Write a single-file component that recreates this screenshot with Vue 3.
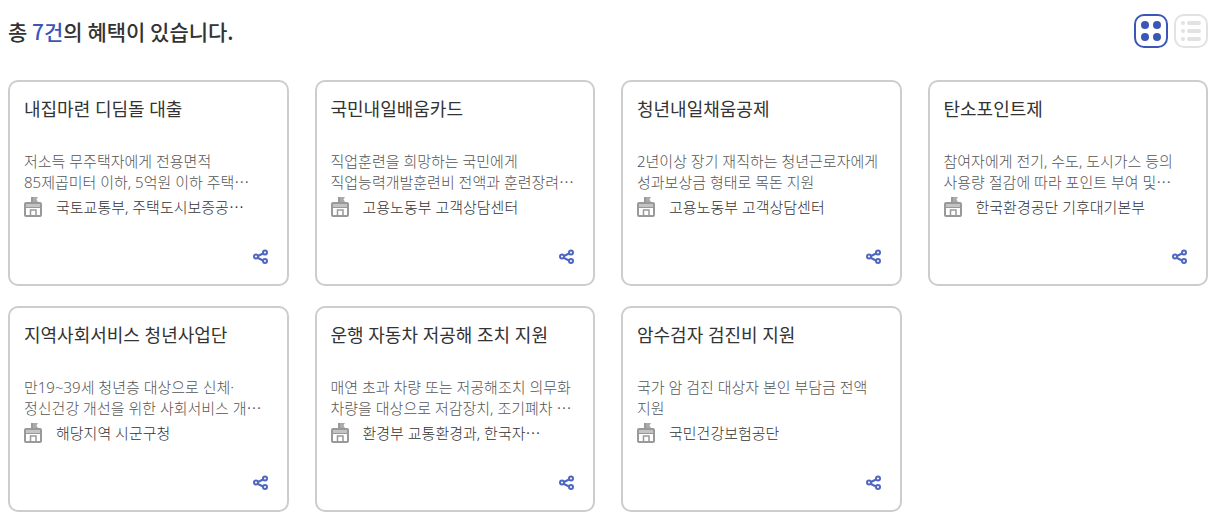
<script setup>
import { ref } from 'vue'

const view = ref('grid')
const benefits = [
  { title: '내집마련 디딤돌 대출', lines: ['저소득 무주택자에게 전용면적', '85제곱미터 이하, 5억원 이하 주택⋯'], agency: '국토교통부, 주택도시보증공⋯' },
  { title: '국민내일배움카드', lines: ['직업훈련을 희망하는 국민에게', '직업능력개발훈련비 전액과 훈련장려⋯'], agency: '고용노동부 고객상담센터' },
  { title: '청년내일채움공제', lines: ['2년이상 장기 재직하는 청년근로자에게', '성과보상금 형태로 목돈 지원'], agency: '고용노동부 고객상담센터' },
  { title: '탄소포인트제', lines: ['참여자에게 전기, 수도, 도시가스 등의', '사용량 절감에 따라 포인트 부여 및⋯'], agency: '한국환경공단 기후대기본부' },
  { title: '지역사회서비스 청년사업단', lines: ['만19~39세 청년층 대상으로 신체·', '정신건강 개선을 위한 사회서비스 개⋯'], agency: '해당지역 시군구청' },
  { title: '운행 자동차 저공해 조치 지원', lines: ['매연 초과 차량 또는 저공해조치 의무화', '차량을 대상으로 저감장치, 조기폐차 ⋯'], agency: '환경부 교통환경과, 한국자⋯' },
  { title: '암수검자 검진비 지원', lines: ['국가 암 검진 대상자 본인 부담금 전액', '지원'], agency: '국민건강보험공단' },
]
</script>

<template>
  <main class="page">
    <header class="top">
      <h1 class="summary">총 <em>{{ benefits.length }}건</em>의 혜택이 있습니다.</h1>
      <div class="views">
        <button type="button" class="view" :class="{ active: view === 'grid' }" :aria-pressed="view === 'grid'" aria-label="카드형 보기" @click="view = 'grid'">
          <svg width="34" height="34" viewBox="0 0 34 34" aria-hidden="true">
            <rect x="1" y="1" width="32" height="32" rx="9" fill="none" stroke="currentColor" stroke-width="2" />
            <g fill="currentColor">
              <circle cx="11" cy="11" r="4" /><circle cx="23" cy="11" r="4" />
              <circle cx="11" cy="23" r="4" /><circle cx="23" cy="23" r="4" />
            </g>
          </svg>
        </button>
        <button type="button" class="view" :class="{ active: view === 'list' }" :aria-pressed="view === 'list'" aria-label="목록형 보기" @click="view = 'list'">
          <svg width="34" height="34" viewBox="0 0 34 34" aria-hidden="true">
            <rect x="1" y="1" width="32" height="32" rx="9" fill="none" stroke="currentColor" stroke-width="2" />
            <g fill="currentColor">
              <circle cx="9" cy="9" r="2" /><circle cx="9" cy="17" r="2" /><circle cx="9" cy="25" r="2" />
              <rect x="13" y="7" width="14" height="4" rx="2" />
              <rect x="13" y="15" width="14" height="4" rx="2" />
              <rect x="13" y="23" width="14" height="4" rx="2" />
            </g>
          </svg>
        </button>
      </div>
    </header>

    <ul class="cards">
      <li v-for="item in benefits" :key="item.title" class="card">
        <h2 class="title">{{ item.title }}</h2>
        <p class="desc"><span v-for="line in item.lines" :key="line">{{ line }}</span></p>
        <p class="agency">
          <svg width="18" height="20" viewBox="0 0 18 20" fill="none" stroke="#999" aria-hidden="true">
            <path d="M8 6V0" stroke-width="2" />
            <path d="M9 0H14L12.500 2.500L14 5H9Z" fill="#aaa" stroke="none" />
            <rect x="1" y="6" width="16" height="13" rx="1" stroke-width="2" />
            <path d="M2 8.500H16" stroke="#c4c4c4" stroke-width="3" />
            <path d="M2 10.500H16" stroke-width="1" />
            <path d="M6.500 19V13H12V19" stroke-width="1.500" />
          </svg>
          <span>{{ item.agency }}</span>
        </p>
        <button type="button" class="share" aria-label="공유하기">
          <svg width="16" height="16" viewBox="0 0 16 16" fill="none" stroke="#4f67bf" stroke-width="2" aria-hidden="true">
            <path d="M5 7L10 4.500M5 9L10 11.500" />
            <circle cx="3" cy="7.500" r="2" /><circle cx="12" cy="3.500" r="2" /><circle cx="12" cy="12" r="2" />
          </svg>
        </button>
      </li>
    </ul>
  </main>
</template>

<style>
body {
  background: #fff;
}
</style>

<style scoped>
.page {
  padding: 14px 24px 8px 8px;
  font-family: "Noto Sans", "Noto Sans CJK KR", sans-serif;
  color: #333;
}
.top {
  display: flex;
  justify-content: space-between;
  align-items: center;
  margin-bottom: 32px;
}
.summary {
  margin: 0;
  font-family: "Noto Sans CJK KR", sans-serif;
  font-size: 21px;
  line-height: 32px;
  font-weight: 500;
}
.summary em {
  font-style: normal;
  color: #3a57b7;
}
.views {
  display: flex;
  gap: 6px;
}
button {
  padding: 0;
  border: 0;
  background: none;
  cursor: pointer;
}
.view {
  color: #e2e2e2;
}
.view.active {
  color: #3a57b7;
}
button svg {
  display: block;
}
.cards {
  display: grid;
  grid-template-columns: repeat(4, minmax(0, 1fr));
  gap: 20px 26px;
  margin: 0;
  padding: 0;
  list-style: none;
}
.card {
  display: flex;
  flex-direction: column;
  padding: 14px;
  border: 2px solid #cdcdcd;
  border-radius: 10px;
}
.title {
  margin: 0 0 29px;
  font-size: 18px;
  line-height: 26px;
  font-weight: 400;
  white-space: nowrap;
}
.desc {
  margin: 0 0 3px;
  font-size: 15px;
  line-height: 21px;
  font-weight: 300;
  color: #555;
}
.desc span {
  display: block;
  white-space: nowrap;
}
.agency {
  display: flex;
  align-items: center;
  gap: 14px;
  margin: 0 0 31px;
  font-size: 15px;
  line-height: 22px;
  font-weight: 300;
  color: #333;
  white-space: nowrap;
}
.share {
  align-self: flex-end;
  margin: 0 4px 5px 0;
}
</style>
